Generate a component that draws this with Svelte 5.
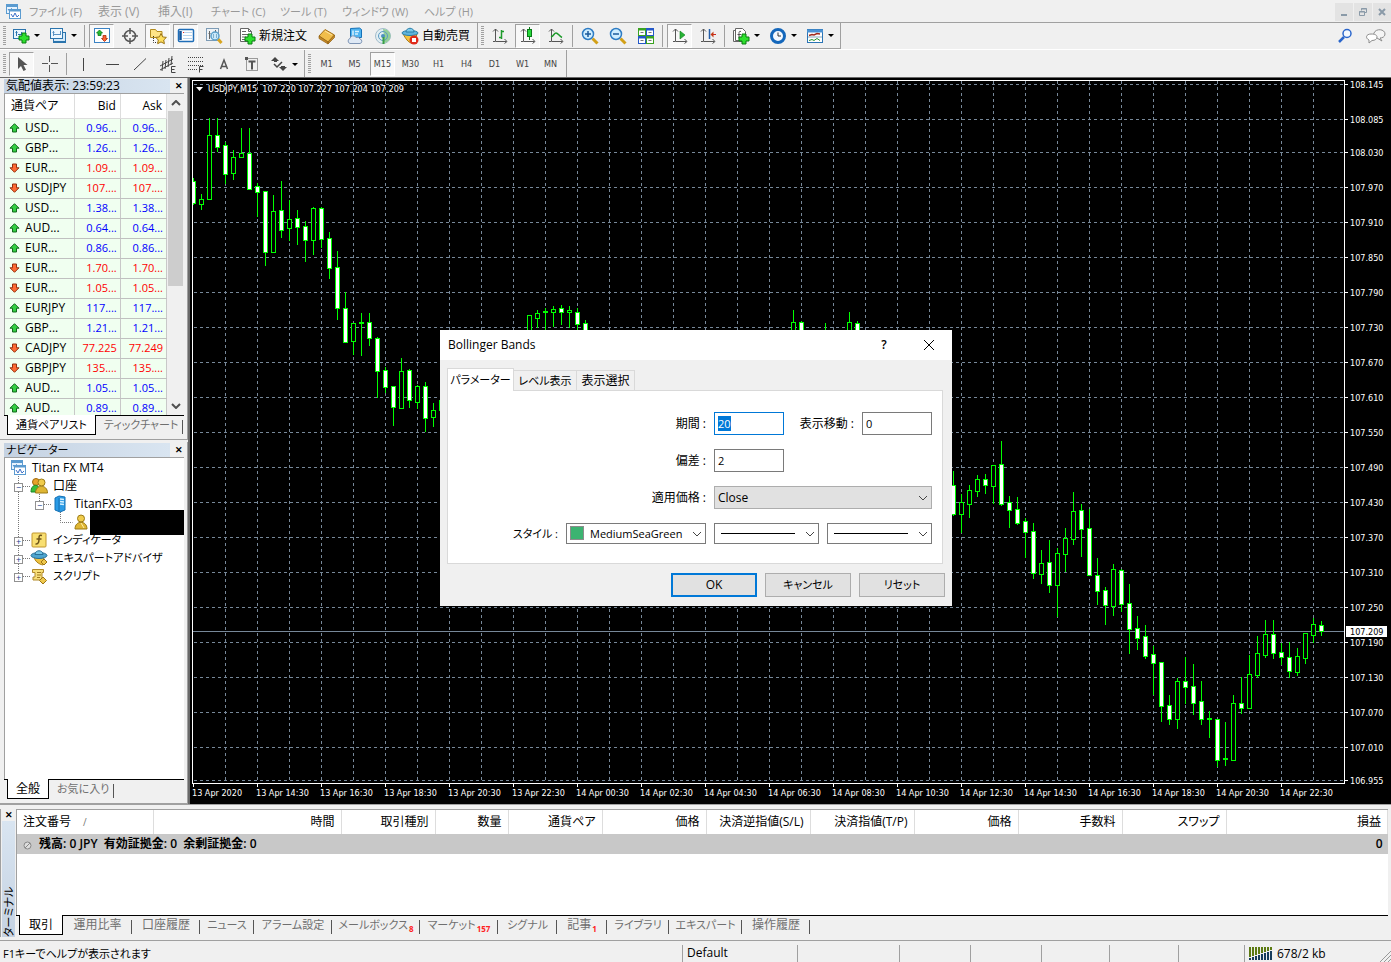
<script lang="ts">
  import { onMount } from 'svelte';

  interface Tool {
    icon?: string;
    kind?: 'sep' | 'split' | 'label';
    pressed?: boolean;
    text?: string;
    title?: string;
  }

  const menus = [
    { text: 'ファイル (F)', width: 69 },
    { text: '表示 (V)', width: 60 },
    { text: '挿入(I)', width: 53 },
    { text: 'チャート (C)', width: 69 },
    { text: 'ツール (T)', width: 62 },
    { text: 'ウィンドウ (W)', width: 82 },
    { text: 'ヘルプ (H)', width: 67 },
  ];

  const standardTools: Tool[] = [
    { icon: 'newChart', kind: 'split', title: 'New chart' },
    { icon: 'profiles', kind: 'split', title: 'Profiles' },
    { kind: 'sep' },
    { icon: 'market', pressed: true, title: 'Market watch' },
    { icon: 'target', title: 'Data window' },
    { icon: 'folder', pressed: true, title: 'Navigator' },
    { icon: 'terminal', pressed: true, title: 'Terminal' },
    { icon: 'tester', title: 'Strategy tester' },
    { kind: 'sep' },
    { icon: 'newOrder', kind: 'label', text: '新規注文' },
    { icon: 'book', title: 'MetaEditor' },
    { icon: 'cloud', title: 'Cloud' },
    { icon: 'signal', title: 'Signals' },
    { icon: 'auto', kind: 'label', text: '自動売買' },
  ];

  const chartTools: Tool[] = [
    { icon: 'bars', title: 'Bar chart' },
    { icon: 'candles', pressed: true, title: 'Candlesticks' },
    { icon: 'line', title: 'Line chart' },
    { kind: 'sep' },
    { icon: 'zoomIn', title: 'Zoom in' },
    { icon: 'zoomOut', title: 'Zoom out' },
    { icon: 'tile', title: 'Tile windows' },
    { kind: 'sep' },
    { icon: 'scroll', pressed: true, title: 'Auto scroll' },
    { icon: 'shift', title: 'Chart shift' },
    { kind: 'sep' },
    { icon: 'indicator', kind: 'split', title: 'Indicators' },
    { icon: 'clock', kind: 'split', title: 'Periods' },
    { icon: 'template', kind: 'split', title: 'Templates' },
  ];

  const drawTools: Tool[] = [
    { icon: 'pointer', pressed: true, title: 'Cursor' },
    { icon: 'cross', title: 'Crosshair' },
    { kind: 'sep' },
    { icon: 'vline', title: 'Vertical line' },
    { icon: 'hline', title: 'Horizontal line' },
    { icon: 'trend', title: 'Trendline' },
    { icon: 'channel', title: 'Channel' },
    { icon: 'fibo', title: 'Fibonacci' },
    { icon: 'textA', title: 'Text' },
    { icon: 'textT', title: 'Text label' },
    { icon: 'arrows', kind: 'split', title: 'Arrows' },
  ];

  const periods = ['M1', 'M5', 'M15', 'M30', 'H1', 'H4', 'D1', 'W1', 'MN'];

  const quotes = [
    { symbol: 'USD...', bid: '0.96...', ask: '0.96...', up: true },
    { symbol: 'GBP...', bid: '1.26...', ask: '1.26...', up: true },
    { symbol: 'EUR...', bid: '1.09...', ask: '1.09...', up: false },
    { symbol: 'USDJPY', bid: '107....', ask: '107....', up: false },
    { symbol: 'USD...', bid: '1.38...', ask: '1.38...', up: true },
    { symbol: 'AUD...', bid: '0.64...', ask: '0.64...', up: true },
    { symbol: 'EUR...', bid: '0.86...', ask: '0.86...', up: true },
    { symbol: 'EUR...', bid: '1.70...', ask: '1.70...', up: false },
    { symbol: 'EUR...', bid: '1.05...', ask: '1.05...', up: false },
    { symbol: 'EURJPY', bid: '117....', ask: '117....', up: true },
    { symbol: 'GBP...', bid: '1.21...', ask: '1.21...', up: true },
    { symbol: 'CADJPY', bid: '77.225', ask: '77.249', up: false },
    { symbol: 'GBPJPY', bid: '135....', ask: '135....', up: false },
    { symbol: 'AUD...', bid: '1.05...', ask: '1.05...', up: true },
    { symbol: 'AUD...', bid: '0.89...', ask: '0.89...', up: true },
  ];

  // bar index, high, body top, body bottom, low, 1 = bearish
  const candles = [
    [0, 178, 181, 203, 204, 1], [1, 194, 199, 204, 209, 0], [2, 118, 135, 199, 199, 0],
    [3, 118, 135, 147, 151, 1], [4, 142, 145, 174, 183, 1], [5, 150, 157, 173, 179, 0],
    [6, 128, 153, 157, 157, 0], [7, 128, 153, 189, 189, 1], [8, 183, 186, 192, 216, 1],
    [9, 191, 191, 252, 265, 1], [10, 195, 211, 252, 252, 0], [11, 181, 210, 230, 237, 1],
    [12, 200, 219, 228, 240, 0], [13, 210, 218, 227, 244, 1], [14, 221, 226, 240, 261, 1],
    [15, 207, 208, 240, 254, 0], [16, 207, 208, 239, 247, 1], [17, 232, 238, 268, 278, 1],
    [18, 251, 267, 308, 319, 1], [19, 292, 308, 342, 342, 1], [20, 323, 323, 341, 354, 0],
    [21, 313, 322, 323, 355, 0], [22, 313, 322, 338, 345, 1], [23, 337, 338, 371, 397, 1],
    [24, 367, 370, 387, 392, 1], [25, 386, 386, 407, 425, 1], [26, 358, 371, 408, 408, 0],
    [27, 369, 370, 400, 407, 1], [28, 385, 386, 402, 408, 0], [29, 382, 386, 418, 431, 1],
    [30, 403, 410, 417, 426, 0], [31, 398, 400, 410, 420, 0], [42, 315, 315, 345, 345, 0],
    [43, 310, 313, 318, 327, 0], [44, 308, 311, 312, 330, 0], [45, 306, 309, 312, 326, 0],
    [46, 305, 308, 312, 324, 1], [47, 306, 310, 312, 327, 0], [48, 308, 312, 324, 329, 1],
    [49, 320, 323, 340, 345, 1], [75, 310, 322, 340, 345, 0], [76, 321, 322, 340, 345, 1],
    [79, 323, 335, 340, 345, 0], [82, 312, 322, 340, 345, 0], [83, 321, 323, 340, 345, 1],
    [95, 471, 485, 514, 515, 1], [96, 494, 502, 514, 532, 0], [97, 485, 490, 504, 517, 0],
    [98, 475, 479, 491, 496, 0], [99, 474, 479, 485, 493, 1], [100, 465, 465, 486, 503, 0],
    [101, 441, 464, 504, 505, 1], [102, 496, 502, 510, 527, 1], [103, 497, 509, 523, 524, 1],
    [104, 518, 521, 532, 557, 1], [105, 523, 531, 573, 578, 1], [106, 550, 563, 574, 583, 0],
    [107, 540, 562, 585, 592, 1], [108, 548, 553, 585, 616, 0], [109, 528, 538, 554, 571, 0],
    [110, 492, 511, 539, 544, 0], [111, 504, 510, 529, 556, 1], [112, 509, 528, 575, 575, 1],
    [113, 558, 575, 591, 604, 1], [114, 587, 590, 605, 624, 1], [115, 564, 569, 606, 615, 0],
    [116, 569, 570, 604, 611, 1], [117, 584, 603, 629, 653, 1], [118, 616, 628, 638, 649, 1],
    [119, 625, 636, 656, 658, 1], [120, 646, 654, 663, 694, 1], [121, 662, 662, 706, 721, 1],
    [122, 695, 705, 719, 724, 1], [123, 678, 681, 719, 728, 0], [124, 657, 681, 687, 703, 1],
    [125, 664, 686, 703, 714, 1], [126, 681, 701, 719, 724, 1], [127, 711, 718, 719, 737, 0],
    [128, 719, 719, 760, 766, 1], [129, 722, 758, 759, 765, 0], [130, 695, 703, 760, 760, 0],
    [131, 677, 703, 708, 713, 1], [132, 655, 674, 708, 708, 0], [133, 636, 653, 675, 677, 0],
    [134, 620, 634, 655, 657, 0], [135, 620, 634, 653, 658, 1], [136, 643, 652, 657, 664, 1],
    [137, 642, 657, 671, 677, 1], [138, 648, 656, 672, 675, 0], [139, 633, 633, 658, 663, 0],
    [140, 618, 624, 635, 642, 0], [141, 621, 625, 631, 635, 1],
  ];

  const gridColumns = Array.from({ length: 35 }, (_, i) => 225 + i * 32);

  const prices: [string, number][] = [
    ['108.145', 84], ['108.085', 119], ['108.030', 152], ['107.970', 187], ['107.910', 222],
    ['107.850', 257], ['107.790', 292], ['107.730', 327], ['107.670', 362], ['107.610', 397],
    ['107.550', 432], ['107.490', 467], ['107.430', 502], ['107.370', 537], ['107.310', 572],
    ['107.250', 607], ['107.190', 642], ['107.130', 677], ['107.070', 712], ['107.010', 747],
    ['106.955', 780],
  ];

  const times = [
    '13 Apr 2020', '13 Apr 14:30', '13 Apr 16:30', '13 Apr 18:30', '13 Apr 20:30', '13 Apr 22:30',
    '14 Apr 00:30', '14 Apr 02:30', '14 Apr 04:30', '14 Apr 06:30', '14 Apr 08:30', '14 Apr 10:30',
    '14 Apr 12:30', '14 Apr 14:30', '14 Apr 16:30', '14 Apr 18:30', '14 Apr 20:30', '14 Apr 22:30',
  ];

  const orderColumns = [
    { text: '注文番号', width: 136 },
    { text: '時間', width: 188 },
    { text: '取引種別', width: 94 },
    { text: '数量', width: 73 },
    { text: '通貨ペア', width: 94 },
    { text: '価格', width: 104 },
    { text: '決済逆指値(S/L)', width: 104 },
    { text: '決済指値(T/P)', width: 104 },
    { text: '価格', width: 104 },
    { text: '手数料', width: 104 },
    { text: 'スワップ', width: 104 },
    { text: '損益', width: 0 },
  ];

  const terminalTabs = [
    { text: '運用比率', width: 69 },
    { text: '口座履歴', width: 68 },
    { text: 'ニュース', width: 54 },
    { text: 'アラーム設定', width: 78 },
    { text: 'メールボックス', width: 88, count: 8 },
    { text: 'マーケット', width: 78, count: 157 },
    { text: 'シグナル', width: 59 },
    { text: '記事', width: 50, count: 1 },
    { text: 'ライブラリ', width: 62 },
    { text: 'エキスパート', width: 73 },
    { text: '操作履歴', width: 68 },
  ];

  const statusCells = [102, 71, 71, 68, 69, 66];

  let period = $state('20');
  let shift = $state('0');
  let deviation = $state('2');
  let periodInput: HTMLInputElement;

  // kana labels are set one size smaller than kanji
  const hasKana = (text: string) => /[ぁ-んァ-ヶ]/.test(text);

  onMount(() => {
    periodInput.focus();
    periodInput.select();
  });
</script>

<svelte:head>
  <title>Titan FX MT4</title>
</svelte:head>

{#snippet axes()}
  <path d="M4.5 2v12.500h11M2 4.500l2.500-2.500 2.500 2.500M13.500 12l2.500 2.500-2.500 2M2 14.500h2" fill="none" stroke="#555" />
{/snippet}

{#snippet plus(x: number, y: number)}
  <path d="M{x + 3} {y}h4v3h3v4h-3v3h-4v-3h-3v-4h3z" fill="#2ee02e" stroke="#087a10" />
{/snippet}

{#snippet icon(name: string)}
  <svg class="icon" viewBox="0 0 18 18" width="18" height="18" aria-hidden="true">
    {#if name === 'logo'}
      <rect x="1.500" y="1.500" width="11" height="9" fill="#e8f4ff" stroke="#5b9bd0" />
      <path d="M1 3h12" stroke="#5b9bd0" stroke-width="2" />
      <path d="M3 6l1.500 2 2-2.500 2 2" stroke="#4a88c8" fill="none" />
      <rect x="4.500" y="6.500" width="11" height="9" fill="#fff" stroke="#5b9bd0" />
      <path d="M4 7.500h12" stroke="#5b9bd0" stroke-width="2" />
      <path d="M6 11l2 3 2-4 2 4 2-2" stroke="#3c70c8" fill="none" />
    {:else if name === 'newChart'}
      <rect x="1.500" y="2.500" width="12" height="9" fill="#eaf6ff" stroke="#2b74ad" />
      <path d="M4.500 4v5M3.500 5.500h2M6 7.500h5M9.500 5v3" stroke="#2b74ad" />
      {@render plus(7, 6)}
    {:else if name === 'profiles'}
      <rect x="4.500" y="5.500" width="12" height="9" fill="#d5eafa" stroke="#2b74ad" />
      <path d="M4 15h13" stroke="#2b74ad" stroke-width="2" />
      <rect x="1.500" y="1.500" width="12" height="10" fill="#eef8ff" stroke="#2b74ad" />
      <path d="M4.500 4v5M3.500 5.500h2M11.500 4v4M4 7.500h8" stroke="#5a93c4" />
    {:else if name === 'market'}
      <rect x="1.500" y="1.500" width="15" height="14" fill="#fff" stroke="#3b83c4" />
      <path d="M6.500 3l3 3H8v2.500H5V6H3.500z" fill="#23bb33" stroke="#0b7a1a" stroke-width=".8" />
      <path d="M11.500 14.500l-3-3H10V8.500h3v3h1.500z" fill="#ff6232" stroke="#a32c0b" stroke-width=".8" />
    {:else if name === 'target'}
      <circle cx="9" cy="9" r="5.500" fill="none" stroke="#555" stroke-width="1.500" />
      <path d="M9 1v6M9 11v6M1 9h6M11 9h6" stroke="#555" stroke-width="1.500" />
    {:else if name === 'folder'}
      <path d="M1.500 2.500h5l1.500 2h5v6h-11.500z" fill="#ffe486" stroke="#b28b1f" />
      <path d="M4.500 9v6.500h4" stroke="#333" stroke-dasharray="1 1" fill="none" />
      <path d="M12 6.500l1.700 3.400 3.700.5-2.700 2.600.7 3.700-3.400-1.800-3.300 1.800.6-3.700-2.600-2.600 3.700-.5z" fill="#ffdf5e" stroke="#9b7517" />
    {:else if name === 'terminal'}
      <rect x="1.500" y="2.500" width="15" height="12" rx="1" fill="#fff" stroke="#1f6eb8" stroke-width="1.500" />
      <path d="M3.500 4v9" stroke="#10539a" stroke-width="2.500" />
      <path d="M6 5.500h9M6 8.500h9M6 11.500h9" stroke="#b8d4ed" />
      <path d="M6 5.500h1" stroke="#e22" />
    {:else if name === 'tester'}
      <rect x="1.500" y="1.500" width="12" height="12" fill="#eef3f7" stroke="#7d9bb5" />
      <path d="M4.500 4v8M3.500 6.500h2M10.500 3v4M8 5.500h4" stroke="#666" />
      <path d="M13 12l3.500 4" stroke="#d8a520" stroke-width="3" />
      <circle cx="10" cy="9" r="4" fill="#cbe9fb" stroke="#5a9fc9" stroke-width="1.500" />
      <path d="M8.500 7v4M11.500 7v4" stroke="#7fb0cc" />
    {:else if name === 'newOrder'}
      <path d="M2.500 1.500h8l3 3v10h-11z" fill="#fff" stroke="#666" />
      <path d="M10.500 1.500v3h3M4 4.500h4M4 7.500h7M4 10h4M4 12.500h3" stroke="#666" fill="none" />
      {@render plus(7, 7)}
    {:else if name === 'book'}
      <path d="M1 9l6-6.500 9.500 5.500-6.500 7z" fill="#f0bd4b" stroke="#a3711a" />
      <path d="M1 9v2.500l9 5.500v-2zM10 15v2l6.500-6.500V8z" fill="#c88a26" stroke="#8f6014" stroke-width=".7" />
      <path d="M7 4l7 4" stroke="#ffe3a0" />
    {:else if name === 'cloud'}
      <path d="M4.500 1.500l9-.5 2 1.500v8h-11z" fill="#4fb4f0" stroke="#1672b8" />
      <path d="M7 3.500v6M9 4.500h4M9 7h3" stroke="#d5f0ff" stroke-width="1.500" />
      <path d="M4 16.500a2.600 2.600 0 0 1 0-5 3.200 3.200 0 0 1 6-1 3 3 0 0 1 4 1.500 2.300 2.300 0 0 1 0 4.500z" fill="#dfe9f5" stroke="#7e95b5" />
    {:else if name === 'signal'}
      <circle cx="9" cy="9" r="7.500" fill="#e2eef2" stroke="#a3bccb" />
      <path d="M9 2a7 7 0 0 1 1 14V9z" fill="#93cf97" />
      <circle cx="9" cy="9" r="4.500" fill="none" stroke="#5b9ac4" />
      <circle cx="9" cy="9" r="2" fill="#4b90c0" />
      <path d="M9.500 10v7" stroke="#3ba045" stroke-width="2" />
    {:else if name === 'auto'}
      <path d="M2 7c3 5 5 8 8 9 3-2 5-5 6-9z" fill="#f4c33c" stroke="#a97b12" />
      <ellipse cx="9" cy="6" rx="8" ry="2.500" fill="#5fb4dc" stroke="#2a7ea8" />
      <path d="M5 5c0-5 8-5 8 0z" fill="#7cc9ea" stroke="#2a7ea8" />
      <circle cx="13" cy="13" r="4.500" fill="#e02a1b" />
      <rect x="11" y="11" width="4" height="4" fill="#fff" />
    {:else if name === 'bars'}
      {@render axes()}
      <path d="M10.500 3v9M8 10.500h2.500M10.500 4.500h2.500" stroke="#1d9a2a" stroke-width="1.500" fill="none" />
    {:else if name === 'candles'}
      {@render axes()}
      <path d="M10.500 0v13" stroke="#0a7a18" />
      <rect x="8.500" y="2.500" width="4" height="7" fill="#27d83b" stroke="#0a7a18" />
    {:else if name === 'line'}
      {@render axes()}
      <path d="M4 10c3-1 3-4 5-4s3 3 6 4.500" stroke="#1d9a2a" stroke-width="1.500" fill="none" />
    {:else if name === 'zoomIn' || name === 'zoomOut'}
      <path d="M11.500 11.500l5 5" stroke="#d2a017" stroke-width="3" />
      <circle cx="7" cy="7" r="5.500" fill="#cfeeff" stroke="#2d7cc4" stroke-width="1.500" />
      <path d={name === 'zoomIn' ? 'M4 7h6M7 4v6' : 'M4 7h6'} stroke="#1c5b9c" stroke-width="1.500" />
    {:else if name === 'tile'}
      <path d="M1 1h8v8H1zM9 9h8v8H9z" fill="#3aa321" />
      <path d="M9 1h8v8H9zM1 9h8v8H1z" fill="#2458c8" />
      <path d="M2 3.500h6V8H2zM10 3.500h6V8h-6zM2 11.500h6V16H2zM10 11.500h6V16h-6z" fill="#fff" />
      <path d="M3.500 5.500h3M11.500 5.500h3M3.500 13.500h3M11.500 13.500h3" stroke="#777" />
    {:else if name === 'scroll'}
      {@render axes()}
      <path d="M9 4l5 4-5 4z" fill="#26b434" stroke="#0d7d1b" stroke-width=".6" />
    {:else if name === 'shift'}
      {@render axes()}
      <path d="M10.500 2v10" stroke="#235da8" stroke-width="1.500" />
      <path d="M17 7.500h-4" stroke="#c22" />
      <path d="M11.500 7.500l3-3v6z" fill="#c33a14" />
    {:else if name === 'indicator'}
      <path d="M1.500 3.500h9v11h-9z" fill="#fff" stroke="#666" />
      <path d="M3.500 1.500h7l3 3v9h-10z" fill="#fff" stroke="#666" />
      <path d="M9 4.500c-2-1-2 1-2 2v5M5.500 7.500h3.500" stroke="#555" fill="none" />
      {@render plus(7, 7)}
    {:else if name === 'clock'}
      <circle cx="9" cy="9" r="6.500" fill="#f3f9ff" stroke="#1467bb" stroke-width="3" />
      <path d="M9 5.500V9h3" stroke="#333" fill="none" />
    {:else if name === 'template'}
      <rect x="1.500" y="2.500" width="15" height="13" fill="#fff" stroke="#2b74b5" />
      <path d="M1 4h16" stroke="#4a92d4" stroke-width="3" />
      <path d="M3 8.500l3-1 2 .5 3-1.500 3 .5" stroke="#a02a1c" stroke-width="1.500" fill="none" />
      <path d="M2 10h14" stroke="#8ab" />
      <path d="M3 13.500l3-1 2 1 3-2 3 2" stroke="#2a9430" fill="none" />
    {:else if name === 'pointer'}
      <path d="M5 2v12l3-3 2.500 5 2.500-1.200-2.500-4.800h4z" fill="#555" />
    {:else if name === 'cross'}
      <path d="M8.500 1v6M8.500 10v7M1 8.500h6M10 8.500h7" stroke="#555" />
    {:else if name === 'vline'}
      <path d="M8.500 3v13" stroke="#444" />
    {:else if name === 'hline'}
      <path d="M3 9.500h13" stroke="#444" />
    {:else if name === 'trend'}
      <path d="M3 15L15 3.500" stroke="#444" />
    {:else if name === 'channel'}
      <path d="M1 11L14 4M1 15L14 8M4 6l-1 10M7 5L6 14M10 3L9 12M13 1l-1 9" stroke="#444" />
      <path d="M16.500 11.500h-4v6h4M12.500 14.500h3" stroke="#444" fill="none" />
    {:else if name === 'fibo'}
      <path d="M1 2.500h15M1 6.500h15M1 10.500h15M1 14.500h9" stroke="#444" stroke-dasharray="1 1" />
      <path d="M16.500 11.500h-4v6M12.500 14.500h3" stroke="#444" fill="none" />
    {:else if name === 'textA'}
      <path d="M5.500 14L9 5l3.500 9M6.500 11.500h5" stroke="#555" stroke-width="1.500" fill="none" />
    {:else if name === 'textT'}
      <rect x="3.500" y="3.500" width="11" height="12" fill="none" stroke="#444" stroke-dasharray="1 1" />
      <path d="M5.500 6.500h7M9 6.500v8" stroke="#555" stroke-width="2" />
      <path d="M2 2h3v3H2z" fill="#555" />
    {:else if name === 'arrows'}
      <path d="M5 2l4 4H7v1H4V6H1zM13 16l-4-4h2v-1h4v1h2z" fill="#444" />
      <path d="M4 9l3 3 5-5" stroke="#444" stroke-width="1.500" fill="none" />
    {:else if name === 'search'}
      <path d="M7 10l-5 5" stroke="#2a66cc" stroke-width="2.500" />
      <circle cx="10" cy="6.500" r="4" fill="#f4f9ff" stroke="#2a66cc" stroke-width="1.500" />
    {:else if name === 'account'}
      <circle cx="6" cy="5" r="3.500" fill="#e8a22a" stroke="#a06a10" />
      <path d="M1 15c0-9 9-9 9 0z" fill="#39c03b" stroke="#1b8524" />
      <circle cx="11.500" cy="5.500" r="3.500" fill="#f0cc4c" stroke="#9b7a14" />
      <path d="M5.500 16c0-9 12-9 12 0z" fill="#dfb634" stroke="#9b7a14" />
    {:else if name === 'user'}
      <circle cx="9" cy="5.500" r="3.500" fill="#f0cc4c" stroke="#9b7a14" />
      <path d="M3 16c0-9 12-9 12 0z" fill="#dfb634" stroke="#9b7a14" />
      <path d="M9 10l3 5" stroke="#fff0a8" />
    {:else if name === 'server'}
      <path d="M4 3l4-2 6 1v13l-5 2-5-2z" fill="#2a9be6" stroke="#1470b4" />
      <path d="M8 3v13" stroke="#1470b4" />
      <path d="M9 4l4 .5M9 6.500l4 .5M9 9l4 .5" stroke="#d6f1ff" stroke-width="1.500" />
    {:else if name === 'function'}
      <rect x="2" y="2" width="14" height="14" rx="1" fill="#f8df72" stroke="#c1962d" />
      <path d="M12 4.500c-3-1-3 1-3 3s0 6-3.500 5.500M6.500 8h5" stroke="#6d541a" stroke-width="1.500" fill="none" />
    {:else if name === 'expert'}
      <path d="M4 8c1 4 4 7 9 8l2-4-2-4z" fill="#eec23f" stroke="#ab8019" />
      <ellipse cx="9" cy="6.500" rx="8" ry="3" fill="#4ca4cf" stroke="#286f97" />
      <path d="M5 5.500c0-5 8-5 8 0z" fill="#75c5e6" stroke="#286f97" />
      <path d="M14 10l3 3-3 3-3-3z" fill="#efc84c" stroke="#9b7517" />
    {:else if name === 'script'}
      <path d="M2.500 2.500h11v3H12v7.500H3v-3h2V5.500H2.500z" fill="#f7df7a" stroke="#b1892a" />
      <path d="M7 5.500h4M7 8h4M7 10.500h3" stroke="#a07a20" />
      <path d="M13 10l3.500 3.500L13 17l-3.500-3.500z" fill="#efc84c" stroke="#9b7517" />
    {/if}
  </svg>
{/snippet}

{#snippet tools(list: Tool[])}
  {#each list as tool}
    {#if tool.kind === 'sep'}
      <span class="toolSep"></span>
    {:else}
      <button
        class="tool"
        class:split={tool.kind === 'split'}
        class:labelled={tool.kind === 'label'}
        class:pressed={tool.pressed}
        aria-label={tool.title}
      >
        {@render icon(tool.icon ?? '')}
        {#if tool.text}<span>{tool.text}</span>{/if}
        {#if tool.kind === 'split'}<span class="caret"></span>{/if}
      </button>
    {/if}
  {/each}
{/snippet}

{#snippet chevron()}
  <svg class="chevron" viewBox="0 0 10 6" width="10" height="6" aria-hidden="true">
    <path d="M1 1l4 4 4-4" fill="none" stroke="#444" />
  </svg>
{/snippet}

<div class="app">
  <nav class="menuBar">
    <span class="menuLogo">{@render icon('logo')}</span>
    {#each menus as menu}
      <button class="menuItem" class:kana={hasKana(menu.text)} style:width="{menu.width}px">{menu.text}</button>
    {/each}
    <div class="windowButtons">
      <button aria-label="Minimize"><svg viewBox="0 0 10 10" width="10" height="10"><path d="M2 8h6" stroke="#8a9aa8" stroke-width="2" /></svg></button>
      <button aria-label="Restore"><svg viewBox="0 0 10 10" width="10" height="10"><path d="M3.500 3.500v-2h5v4h-2M1.500 4.500h5v4h-5zM3 2h6M1 5h6" fill="none" stroke="#8a9aa8" /></svg></button>
      <button aria-label="Close"><svg viewBox="0 0 10 10" width="10" height="10"><path d="M2 2l6 6M8 2L2 8" stroke="#8a9aa8" stroke-width="2" /></svg></button>
    </div>
  </nav>

  <div class="toolRow">
    <div class="toolGroup"><span class="grip"></span>{@render tools(standardTools)}</div>
    <div class="toolGroup"><span class="grip"></span>{@render tools(chartTools)}</div>
    <div class="rightTools">
      <button aria-label="Search">{@render icon('search')}</button>
      <button aria-label="Chat">
        <svg viewBox="0 0 22 18" width="22" height="18">
          <path d="M20 7c0 3-3 4-5 4l2 3-5-3c-3-1-4-3-3-5 2-5 11-4 11 1z" fill="#f5f5f5" stroke="#8d8d8d" />
          <path d="M12 10c0 2-2 3.500-5 3.500L4 16v-3C0 11 1 7 6 7c4 0 6 1 6 3z" fill="#fff" stroke="#8d8d8d" />
        </svg>
      </button>
    </div>
  </div>

  <div class="toolRow">
    <div class="toolGroup"><span class="grip"></span>{@render tools(drawTools)}</div>
    <div class="toolGroup">
      <span class="grip"></span>
      {#each periods as item}
        <button class="tool period" class:pressed={item === 'M15'}>{item}</button>
      {/each}
    </div>
  </div>

  <main class="workspace">
    <aside class="sidebar">
      <section class="panel">
        <header class="panelHeader">
          <h2>気配値表示: 23:59:23</h2>
          <button class="closeBtn" aria-label="Close">✕</button>
        </header>
        <div class="quoteBox">
          <table class="quotes">
            <thead>
              <tr><th>通貨ペア</th><th>Bid</th><th>Ask</th></tr>
            </thead>
            <tbody>
              {#each quotes as quote}
                <tr class:down={!quote.up}>
                  <td>
                    <svg viewBox="0 0 11 10" width="11" height="10" aria-hidden="true">
                      {#if quote.up}
                        <path d="M5.500 .7l4.500 4.500H7.500v3.800h-4V5.200H1z" fill="#35cf43" stroke="#12681c" />
                      {:else}
                        <path d="M5.500 9.300L1 4.800h2.500V1h4v3.800H10z" fill="#ff6a34" stroke="#93300f" />
                      {/if}
                    </svg>
                    {quote.symbol}
                  </td>
                  <td>{quote.bid}</td>
                  <td>{quote.ask}</td>
                </tr>
              {/each}
            </tbody>
          </table>
          <div class="scrollbar">
            <svg viewBox="0 0 10 6" width="10" height="6"><path d="M1 5l4-4 4 4" fill="none" stroke="#505050" stroke-width="2" /></svg>
            <span class="thumb"></span>
            <svg viewBox="0 0 10 6" width="10" height="6"><path d="M1 1l4 4 4-4" fill="none" stroke="#505050" stroke-width="2" /></svg>
          </div>
        </div>
        <div class="tabs">
          <button class="tab active kana">通貨ペアリスト</button>
          <button class="tab kana">ティックチャート</button>
        </div>
      </section>

      <section class="panel grow">
        <header class="panelHeader">
          <h2 class="kana">ナビゲーター</h2>
          <button class="closeBtn" aria-label="Close">✕</button>
        </header>
        <div class="treeBox">
          <svg class="treeLines" viewBox="0 0 90 130" width="90" height="130" aria-hidden="true">
            <path d="M13.500 18v98M18 28.500h8M18 82.500h8M18 100.500h8M18 118.500h8M34.500 36v10M39 46.500h8M55.500 54v10.500h12" fill="none" stroke="#777" stroke-dasharray="1 1" />
          </svg>
          <ul class="tree">
            <li class="root">{@render icon('logo')}<span>Titan FX MT4</span></li>
            <li class="branch"><span class="expander">−</span>{@render icon('account')}<span>口座</span></li>
            <li class="server"><span class="expander">−</span>{@render icon('server')}<span>TitanFX-03</span></li>
            <li class="login">{@render icon('user')}<span class="redacted"></span></li>
            <li class="branch kana"><span class="expander">+</span>{@render icon('function')}<span>インディケータ</span></li>
            <li class="branch kana"><span class="expander">+</span>{@render icon('expert')}<span>エキスパートアドバイザ</span></li>
            <li class="branch kana"><span class="expander">+</span>{@render icon('script')}<span>スクリプト</span></li>
          </ul>
        </div>
        <div class="tabs">
          <button class="tab active">全般</button>
          <button class="tab kana">お気に入り</button>
        </div>
      </section>
    </aside>

    <div class="chart">
      <svg viewBox="190 78 1201 726" role="img" aria-label="USDJPY,M15">
        <rect x="190" y="78" width="1201" height="726" fill="#000" />
        <g class="crisp grid">
          {#each gridColumns as x}
            <path d="M{x + 0.5} 81V783" />
          {/each}
          {#each prices as [, y]}
            <path d="M194 {y + 0.5}H1344" />
          {/each}
        </g>
        <path class="crisp" d="M193 631.5H1344" stroke="#778899" />
        <g class="crisp">
          {#each candles as [bar, high, top, bottom, low, bearish]}
            <path d="M{bar * 8 + 193.5} {high}V{top}M{bar * 8 + 193.5} {bottom}V{low + 1}" stroke="#0f0" />
            <rect
              x={bar * 8 + 191.5}
              y={top + 0.5}
              width="4"
              height={bottom - top}
              fill={bearish ? '#fff' : '#000'}
              stroke="#0f0"
            />
          {/each}
          <rect x="190" y="78" width="2" height="726" fill="#000" />
          <path d="M192.500 783.500V80.500H1344.500V783.500H192" fill="none" stroke="#fff" />
          {#each prices as [, y]}
            <path d="M1345 {y + 0.5}h3" stroke="#fff" />
          {/each}
          {#each times as _, i}
            <path d="M{i * 64 + 193.5} 784v3" stroke="#fff" />
          {/each}
        </g>
        {#each prices as [label, y]}
          <text x="1350" y={y + 4}>{label}</text>
        {/each}
        <rect x="1346" y="626" width="41" height="11" fill="#fff" />
        <text class="current" x="1350" y="635">107.209</text>
        {#each times as label, i}
          <text x={i * 64 + 192} y="796">{label}</text>
        {/each}
        <path d="M196 87h7l-3.500 4z" fill="#fff" />
        <text x="208" y="92" xml:space="preserve">USDJPY,M15  107.220 107.227 107.204 107.209</text>
      </svg>
    </div>
  </main>

  <section class="terminal">
    <div class="terminalSide">
      <button class="closeBtn" aria-label="Close">✕</button>
      <h2 class="kana">ターミナル</h2>
    </div>
    <div class="terminalBody">
      <div class="orderBox">
        <table class="orders">
          <colgroup>
            {#each orderColumns as column}
              <col style:width={column.width ? `${column.width}px` : 'auto'} />
            {/each}
          </colgroup>
          <thead>
            <tr>
              {#each orderColumns as column, i}
                <th>{column.text}{#if i === 0}<span class="sortMark">/</span>{/if}</th>
              {/each}
            </tr>
          </thead>
          <tbody>
            <tr>
              <td colspan="11">
                <svg viewBox="0 0 9 9" width="9" height="9" aria-hidden="true">
                  <circle cx="4.500" cy="4.500" r="3.500" fill="#ddd" stroke="#888" />
                  <path d="M2 7l5-5" stroke="#888" />
                </svg>
                残高: 0 JPY&nbsp; 有効証拠金: 0&nbsp; 余剰証拠金: 0
              </td>
              <td>0</td>
            </tr>
          </tbody>
        </table>
      </div>
      <div class="tabs terminalTabs">
        <button class="tab active">取引</button>
        {#each terminalTabs as tab}
          <button class="tab" class:kana={hasKana(tab.text)} style:width="{tab.width}px">
            {tab.text}{#if tab.count}<small>{tab.count}</small>{/if}
          </button>
        {/each}
      </div>
    </div>
  </section>

  <footer class="statusBar">
    <span class="hint kana">F1キーでヘルプが表示されます</span>
    <span class="statusCell profile">Default</span>
    {#each statusCells as width}
      <span class="statusCell" style:width="{width}px"></span>
    {/each}
    <span class="statusCell traffic">
      <svg viewBox="0 0 24 13" width="24" height="13" aria-hidden="true">
        {#each [0, 1, 2, 3, 4, 5, 6, 7] as i}
          <rect x={i * 3} y="0" width="2" height="13" fill="#5c7a12" />
          <rect x={i * 3} y={11 - i} width="2" height={2 + i} fill="#173c5c" />
          <rect x={i * 3} y={10 - i} width="2" height="1" fill="#f0f0f0" />
        {/each}
      </svg>
      678/2 kb
      <svg class="resizer" viewBox="0 0 12 12" width="12" height="12" aria-hidden="true">
        <path d="M1 12L12 1M5 12l7-7M9 12l3-3" stroke="#999" />
      </svg>
    </span>
  </footer>

  <form class="dialog" aria-label="Bollinger Bands" onsubmit={(e) => e.preventDefault()}>
    <header class="dialogTitle">
      <h1>Bollinger Bands</h1>
      <button type="button" class="help">?</button>
      <button type="button" aria-label="Close">
        <svg viewBox="0 0 12 12" width="12" height="12"><path d="M1 1l10 10M11 1L1 11" stroke="#000" /></svg>
      </button>
    </header>
    <div class="dialogTabs">
      <button type="button" class="active kana">パラメーター</button>
      <button type="button" class="kana">レベル表示</button>
      <button type="button">表示選択</button>
    </div>
    <div class="pane">
      <div class="fieldRow">
        <label for="period">期間 :</label>
        <input id="period" type="text" bind:value={period} bind:this={periodInput} />
        <label for="shift">表示移動 :</label>
        <input id="shift" type="text" bind:value={shift} />
      </div>
      <div class="fieldRow">
        <label for="deviation">偏差 :</label>
        <input id="deviation" type="text" bind:value={deviation} />
      </div>
      <div class="fieldRow">
        <label for="price">適用価格 :</label>
        <div class="selectWrap wide">
          <select id="price"><option>Close</option></select>
          {@render chevron()}
        </div>
      </div>
      <div class="styleRow">
        <label class="kana" for="color">スタイル :</label>
        <div class="selectWrap color">
          <span class="swatch"></span>
          <select id="color"><option>MediumSeaGreen</option></select>
          {@render chevron()}
        </div>
        <div class="selectWrap">
          <span class="strokeSample"></span>
          <select aria-label="Line style"><option></option></select>
          {@render chevron()}
        </div>
        <div class="selectWrap">
          <span class="strokeSample"></span>
          <select aria-label="Line width"><option></option></select>
          {@render chevron()}
        </div>
      </div>
    </div>
    <div class="actions">
      <button type="submit" class="primary">OK</button>
      <button type="button" class="kana">キャンセル</button>
      <button type="reset" class="kana">リセット</button>
    </div>
  </form>
</div>

<style>
  :global(body) {
    margin: 0;
    background: #f0f0f0;
  }

  .app {
    position: relative;
    display: flex;
    flex-direction: column;
    min-height: 100vh;
    overflow: hidden;
    background: #f0f0f0;
    color: #000;
    font-family: 'Open Sans', 'Noto Sans CJK JP', sans-serif;
    font-size: 12px;
    line-height: 16px;
    font-feature-settings: 'palt';
  }

  .app * {
    box-sizing: border-box;
  }

  button, input, select {
    margin: 0;
    padding: 0;
    border: 0;
    border-radius: 0;
    background: none;
    color: inherit;
    font: inherit;
    font-feature-settings: inherit;
  }

  h1, h2 {
    margin: 0;
    font-size: 12px;
    font-weight: 400;
  }

  svg {
    display: block;
    flex: none;
  }

  .app .kana {
    font-size: 11px;
  }

  .menuBar {
    display: flex;
    align-items: center;
    height: 23px;
    padding: 2px 0 0 5px;
    border-bottom: 1px solid #a0a0a0;
  }

  .menuLogo {
    width: 24px;
  }

  .menuItem {
    color: #999;
    text-align: left;
    white-space: nowrap;
  }

  .windowButtons {
    display: flex;
    gap: 1px;
    margin-left: auto;
  }

  .windowButtons button {
    display: grid;
    place-items: center;
    width: 18px;
    height: 18px;
    background: #e3e3e3;
  }

  .toolRow {
    display: flex;
    height: 27px;
    border-bottom: 1px solid #fff;
  }

  .toolRow + .toolRow {
    height: 28px;
    border-bottom: 1px solid #696969;
  }

  .toolGroup {
    display: flex;
    align-items: center;
    border-right: 1px solid #a0a0a0;
    border-bottom: 1px solid #a0a0a0;
  }

  .toolRow + .toolRow .toolGroup {
    padding-top: 1px;
    border-bottom: 0;
  }

  .grip {
    width: 3px;
    height: 20px;
    margin: 0 3px;
    background: repeating-linear-gradient(#a0a0a0 0 1px, #f0f0f0 1px 2px);
  }

  .tool {
    display: flex;
    align-items: center;
    justify-content: center;
    width: 25px;
    height: 24px;
    margin-right: 3px;
  }

  .tool.pressed {
    border: 1px solid;
    border-color: #a0a0a0 #fff #fff #a0a0a0;
    background: #f8f8f8;
  }

  .tool.split {
    justify-content: flex-start;
    gap: 4px;
    width: 37px;
    margin-right: 0;
    padding-left: 3px;
  }

  .tool.labelled {
    justify-content: flex-start;
    gap: 3px;
    width: 76px;
    padding-left: 3px;
    white-space: nowrap;
  }

  .caret {
    border: 3px solid transparent;
    border-top-color: #000;
    border-bottom: 0;
  }

  .toolSep {
    width: 1px;
    height: 22px;
    margin: 0 4px 0 1px;
    background: #a0a0a0;
  }

  .period {
    color: #444;
    font-family: 'DejaVu Sans Condensed', sans-serif;
    font-size: 9px;
  }

  .rightTools {
    display: flex;
    align-items: center;
    gap: 10px;
    margin-left: auto;
    padding-right: 4px;
  }

  .workspace {
    display: flex;
    flex: 1;
  }

  .sidebar {
    display: flex;
    flex: none;
    flex-direction: column;
    gap: 2px;
    width: 190px;
    border-right: 2px solid #696969;
  }

  .panel {
    display: flex;
    flex-direction: column;
    padding: 0 3px 3px 4px;
    border-bottom: 1px solid #a0a0a0;
    border-right: 1px solid #a0a0a0;
  }

  .panel.grow {
    flex: 1;
  }

  .panelHeader {
    display: flex;
    align-items: center;
    gap: 3px;
    height: 15px;
  }

  .panelHeader h2 {
    flex: 1;
    height: 14px;
    padding-left: 2px;
    background: linear-gradient(90deg, #c5d2e2, #d9e5f1);
    line-height: 14px;
  }

  .closeBtn {
    width: 11px;
    font-size: 9px;
    font-weight: 700;
    line-height: 12px;
  }

  .quoteBox {
    display: flex;
    height: 322px;
    overflow: hidden;
    border: 1px solid #a0a0a0;
    border-width: 1px 0 0 1px;
    background: #fff;
  }

  .quotes {
    flex: 1;
    table-layout: fixed;
    border-collapse: collapse;
  }

  .quotes th, .quotes td {
    height: 20px;
    padding: 0 3px 0 0;
    border-right: 1px solid #c8c8c8;
    border-bottom: 1px solid #c0c0c0;
    font-weight: 400;
    text-align: right;
    white-space: nowrap;
  }

  .quotes th {
    height: 24px;
    padding-right: 4px;
    border-color: #ddd;
  }

  .quotes th:first-child {
    width: 69px;
    padding-left: 6px;
    text-align: left;
  }

  .quotes tbody tr {
    background: #f0fff0;
    color: #00f;
    font-size: 11px;
  }

  .quotes tbody tr.down {
    color: #f00;
  }

  .quotes td:first-child {
    padding-left: 4px;
    color: #000;
    font-size: 12px;
    text-align: left;
  }

  .quotes td svg {
    display: inline-block;
    margin-right: 2px;
    vertical-align: -1px;
  }

  .scrollbar {
    display: flex;
    flex-direction: column;
    align-items: center;
    width: 17px;
    padding: 6px 0;
    background: #f0f0f0;
  }

  .thumb {
    width: 15px;
    height: 175px;
    margin: 5px 0 auto;
    background: #cdcdcd;
  }

  .tabs {
    display: flex;
    height: 21px;
    border-top: 1px solid #000;
  }

  .tab {
    position: relative;
    height: 18px;
    padding: 0 5px 0 8px;
    color: #6f6f6f;
    white-space: nowrap;
  }

  .tab::after {
    position: absolute;
    top: 4px;
    right: 0;
    width: 1px;
    height: 14px;
    background: #555;
    content: '';
  }

  .tab.active {
    height: 20px;
    margin: -1px 0 0 3px;
    padding: 0 8px;
    border: 1px solid #000;
    border-top: 0;
    background: #fff;
    color: #000;
  }

  .tab.active::after {
    display: none;
  }

  .treeBox {
    position: relative;
    flex: 1;
    border: 1px solid #a0a0a0;
    border-width: 1px 0 0 1px;
    background: #fff;
  }

  .treeLines {
    position: absolute;
    top: 0;
    left: 0;
  }

  .tree {
    position: relative;
    margin: 0;
    padding: 1px 0 0;
    list-style: none;
  }

  .tree li {
    position: relative;
    display: flex;
    align-items: center;
    height: 18px;
    padding-left: 8px;
    white-space: nowrap;
  }

  .tree li .icon + span {
    margin-left: 5px;
  }

  .tree .root {
    padding-left: 5px;
  }

  .tree .root .icon + span {
    margin-left: 4px;
  }

  .tree .server {
    padding-left: 29px;
  }

  .tree .login {
    padding-left: 67px;
  }

  .expander {
    width: 9px;
    height: 9px;
    margin: 3px 7px 0 1px;
    border: 1px solid #919191;
    background: #fff;
    color: #223c8c;
    font-size: 9px;
    line-height: 7px;
    text-align: center;
  }

  .redacted {
    position: absolute;
    z-index: 1;
    top: -3px;
    right: 0;
    left: 80px;
    height: 25px;
    background: #000;
  }

  .chart {
    flex: 1;
    min-width: 0;
    background: #000;
  }

  .chart svg {
    width: 100%;
  }

  .chart text {
    fill: #fff;
    font-family: 'DejaVu Sans Condensed', 'DejaVu Sans', sans-serif;
    font-size: 9px;
  }

  .chart text.current {
    fill: #000;
  }

  .crisp {
    shape-rendering: crispEdges;
  }

  .grid path {
    stroke: #778899;
    stroke-dasharray: 3 3;
  }

  .terminal {
    display: flex;
    height: 137px;
    padding: 4px 3px 3px 0;
    border-top: 1px solid #a0a0a0;
    border-bottom: 1px solid #a0a0a0;
  }

  .terminalSide {
    display: flex;
    flex-direction: column;
    align-items: center;
    width: 16px;
    border-left: 1px solid #a0a0a0;
  }

  .terminalSide h2 {
    flex: 1;
    width: 13px;
    min-height: 0;
    background: linear-gradient(#c5d2e2, #d9e5f1);
    line-height: 13px;
    transform: rotate(180deg);
    white-space: nowrap;
    writing-mode: vertical-rl;
    text-orientation: sideways;
  }

  .terminalBody {
    display: flex;
    flex: 1;
    flex-direction: column;
    min-width: 0;
  }

  .orderBox {
    flex: 1;
    border: 1px solid #a0a0a0;
    border-width: 1px 0 0 1px;
    background: #fff;
  }

  .orders {
    width: 100%;
    table-layout: fixed;
    border-collapse: collapse;
  }

  .orders th {
    height: 24px;
    padding: 0 6px 0 0;
    border-right: 1px solid #ddd;
    font-weight: 400;
    text-align: right;
    white-space: nowrap;
  }

  .orders th:first-child {
    padding-left: 6px;
    text-align: left;
  }

  .sortMark {
    margin-left: 12px;
    color: #777;
    font-size: 10px;
  }

  .orders td {
    height: 20px;
    padding: 0 5px 0 6px;
    background: #c8c8c8;
    font-weight: 600;
    text-align: left;
  }

  .orders td:last-child {
    text-align: right;
  }

  .orders td svg {
    display: inline-block;
    margin-right: 4px;
    vertical-align: -2px;
  }

  .terminalTabs {
    height: 22px;
  }

  .terminalTabs .tab {
    padding: 0;
    text-align: center;
  }

  .terminalTabs .tab.active {
    width: 44px;
  }

  .tab small {
    margin-left: 1px;
    color: #f22;
    font-size: 8px;
    font-weight: 700;
    line-height: 8px;
    vertical-align: -3px;
  }

  .statusBar {
    display: flex;
    align-items: center;
    height: 21px;
    padding-top: 4px;
  }

  .hint {
    flex: 1;
    padding-left: 3px;
  }

  .statusCell {
    height: 17px;
    padding-left: 4px;
    border-left: 1px solid #a0a0a0;
  }

  .profile {
    width: 115px;
  }

  .traffic {
    display: flex;
    align-items: center;
    gap: 4px;
    width: 147px;
  }

  .resizer {
    align-self: flex-end;
    margin-left: auto;
  }

  .dialog {
    position: absolute;
    top: 330px;
    left: 440px;
    width: 512px;
    background: #f0f0f0;
  }

  .dialogTitle {
    display: flex;
    align-items: center;
    height: 30px;
    padding: 0 0 0 8px;
    background: #fff;
  }

  .dialogTitle h1 {
    flex: 1;
  }

  .dialogTitle button {
    display: grid;
    place-items: center;
    width: 46px;
    height: 28px;
  }

  .dialogTitle .help {
    width: 44px;
    font-weight: 600;
  }

  .dialogTabs {
    display: flex;
    align-items: flex-end;
    height: 31px;
    padding: 8px 7px 0;
  }

  .dialogTabs button {
    width: 58px;
    height: 21px;
    border: 1px solid #d9d9d9;
    border-left: 0;
    white-space: nowrap;
  }

  .dialogTabs button:nth-child(2) {
    width: 63px;
  }

  .dialogTabs .active {
    z-index: 1;
    width: 67px;
    height: 23px;
    border-left: 1px solid #d9d9d9;
    border-bottom: 0;
    background: #fff;
  }

  .pane {
    display: flex;
    flex-direction: column;
    gap: 14px;
    height: 174px;
    margin: -1px 9px 0 7px;
    padding: 21px 10px 0;
    border: 1px solid #d9d9d9;
    background: #fff;
  }

  .fieldRow {
    display: grid;
    grid-template-columns: 1fr 70px 78px 70px;
    align-items: center;
    height: 23px;
  }

  .pane label {
    padding-right: 8px;
    text-align: right;
    white-space: nowrap;
  }

  .pane input {
    width: 70px;
    height: 23px;
    padding: 0 3px;
    border: 1px solid #7a7a7a;
    background: #fff;
    font-size: 11px;
    outline: none;
  }

  .pane input:focus {
    border-color: #0078d7;
  }

  .pane input::selection {
    background: #0078d7;
    color: #fff;
  }

  .styleRow {
    display: flex;
    align-items: center;
    gap: 8px;
    height: 21px;
  }

  .styleRow label {
    flex: 1;
    padding-right: 0;
  }

  .selectWrap {
    position: relative;
    width: 105px;
    height: 21px;
  }

  .selectWrap.wide {
    grid-column: 2 / 5;
    width: auto;
    height: 23px;
  }

  .selectWrap.color {
    width: 140px;
  }

  .selectWrap select {
    width: 100%;
    height: 100%;
    padding-left: 3px;
    border: 1px solid #7a7a7a;
    appearance: none;
  }

  .selectWrap.wide select {
    border-color: #adadad;
    background: #e1e1e1;
  }

  .selectWrap.color select {
    padding-left: 23px;
    font-size: 11px;
  }

  .swatch {
    position: absolute;
    top: 3px;
    left: 4px;
    width: 14px;
    height: 14px;
    border: 1px solid #8c8c8c;
    background: mediumseagreen;
  }

  .strokeSample {
    position: absolute;
    top: 10px;
    left: 7px;
    width: 74px;
    height: 1px;
    background: #000;
  }

  .chevron {
    position: absolute;
    top: calc(50% - 3px);
    right: 4px;
  }

  .actions {
    display: flex;
    justify-content: flex-end;
    gap: 8px;
    padding: 9px 7px;
  }

  .actions button {
    width: 86px;
    height: 24px;
    border: 1px solid #adadad;
    background: #e1e1e1;
  }

  .actions .primary {
    border: 2px solid #0078d7;
  }
</style>
